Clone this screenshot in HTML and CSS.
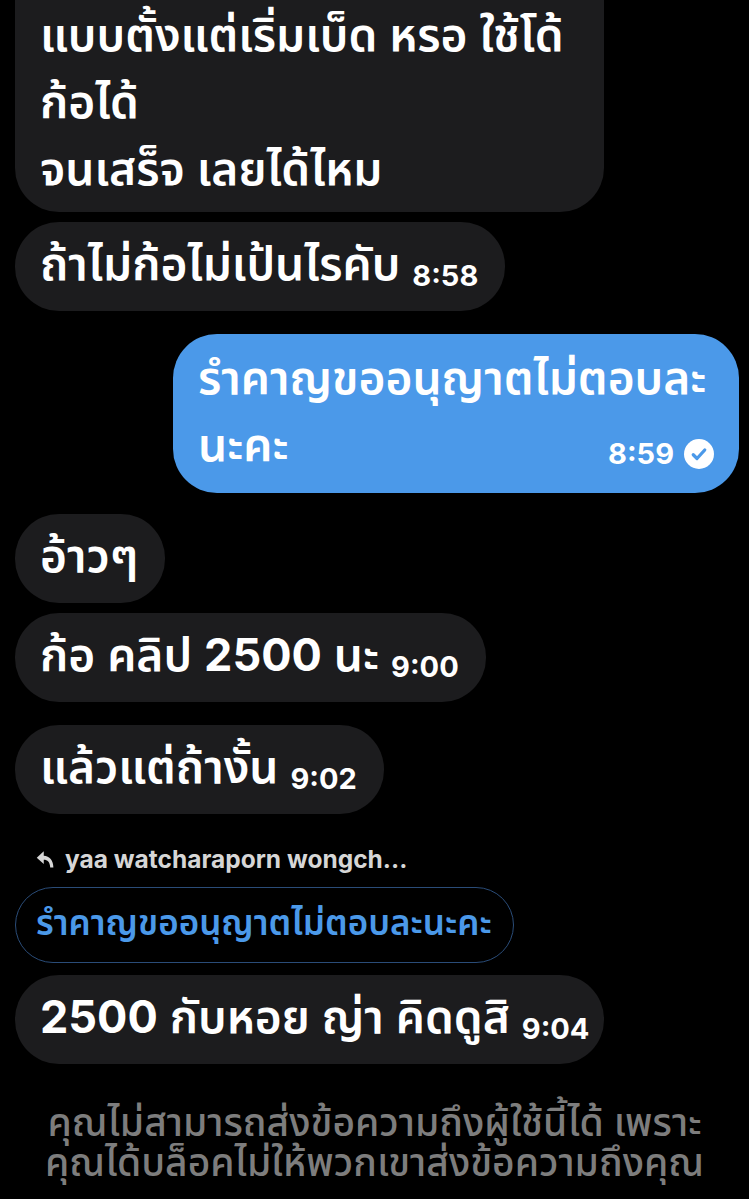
FILE: index.html
```html
<!DOCTYPE html>
<html lang="th">
<head>
    <meta charset="UTF-8">
    <meta name="viewport" content="width=device-width, initial-scale=1.0">
    <title>Messages</title>
    <link rel="stylesheet" href="styles.css">
</head>
<body>
    <div class="chat">
        <div class="bubble in first">แบบตั้งแต่เริ่มเบ็ด หรอ ใช้โด้<br>ก้อได้<br>จนเสร็จ เลยได้ไหม</div>
        <div class="bubble in">ถ้าไม่ก้อไม่เป้นไรคับ <span class="time">8:58</span></div>

        <div class="bubble out">
            รำคาญขออนุญาตไม่ตอบละ<br>
            <span class="last-line">นะคะ
                <span class="meta"><span class="time">8:59</span>
                    <svg class="seen" viewBox="0 0 24 24" width="30" height="30">
                        <circle cx="12" cy="12" r="12" fill="#fff"/>
                        <path d="M7.4 12.6l3 3 6.2-6.8" fill="none" stroke="#4b99e9" stroke-width="2.6" stroke-linecap="round" stroke-linejoin="round"/>
                    </svg>
                </span>
            </span>
        </div>

        <div class="bubble in after-out">อ้าวๆ</div>
        <div class="bubble in">ก้อ คลิป <b class="num">2500</b> นะ <span class="time">9:00</span></div>
        <div class="bubble in gap-top">แล้วแต่ถ้างั้น <span class="time">9:02</span></div>

        <div class="reply-to">
            <svg class="reply-icon" viewBox="0 0 24 24" width="21" height="21">
                <path d="M10 2.5L2 10l8 7v-4.6c4.4 0 7 2.6 7.4 8.6h3.6c0-8.2-4.4-12.9-11-13.4V2.5z" fill="#d6d6d6"/>
            </svg>
            <span>yaa watcharaporn wongch...</span>
        </div>
        <div class="quote">รำคาญขออนุญาตไม่ตอบละนะคะ</div>
        <div class="bubble in tight"><b class="num">2500</b> กับหอย ญ่า คิดดูสิ <span class="time">9:04</span></div>
    </div>

    <p class="blocked">คุณไม่สามารถส่งข้อความถึงผู้ใช้นี้ได้ เพราะ<br>คุณได้บล็อคไม่ให้พวกเขาส่งข้อความถึงคุณ</p>
</body>
</html>
```

FILE: styles.css
```css
body {
    margin: 0;
    background-color: #000;
    color: #fff;
    font-family: "Noto Sans Thai", "Noto Sans", Roboto, sans-serif;
    overflow: hidden;
}
.chat {
    display: flex;
    flex-direction: column;
    align-items: flex-start;
    gap: 10px;
    padding: 0 10px 0 15px;
}
.bubble {
    max-width: 537px;
    padding: 11px 27px 11px 25px;
    border-radius: 44px;
    background-color: #1c1c1e;
    font-size: 46px;
    font-weight: 600;
    line-height: 67px;
    white-space: nowrap;
}
.bubble.first {
    padding-top: 4px;
    padding-bottom: 7px;
    border-radius: 0 0 44px 44px;
    width: 537px;
}
.bubble.out {
    align-self: flex-end;
    margin-top: 13px;
    padding: 13px 25px 12px;
    width: 516px;
    background-color: #4b99e9;
    border-radius: 44px;
}
.after-out {
    margin-top: 11px;
}
.gap-top {
    margin-top: 13px;
}
.tight {
    margin-top: 2px;
}
.last-line {
    display: flex;
    justify-content: space-between;
    align-items: center;
}
.meta {
    display: flex;
    align-items: center;
    gap: 10px;
    padding-top: 12px;
}
.time {
    font-family: Inter, Roboto, sans-serif;
    font-size: 29px;
    font-weight: 700;
    line-height: 1;
    vertical-align: -6px;
}
.num {
    font-family: Inter, Roboto, sans-serif;
    font-weight: 700;
    font-size: 45px;
    line-height: 1;
}
.reply-to {
    display: flex;
    align-items: center;
    gap: 9px;
    height: 30px;
    margin: 20px 0 0 20px;
    color: #d6d6d6;
    font-family: Inter, Roboto, sans-serif;
    font-size: 24.5px;
    font-weight: 700;
}
.quote {
    margin-top: 3px;
    padding: 0 21px 0 20px;
    border: 1px solid #2a4c78;
    border-radius: 40px;
    color: #4b99e9;
    font-size: 35px;
    font-weight: 600;
    line-height: 74px;
}
.blocked {
    margin: 41px 0 0;
    text-align: center;
    color: #7d7d7d;
    font-size: 39px;
    font-weight: 500;
    line-height: 40px;
    white-space: nowrap;
}
```
